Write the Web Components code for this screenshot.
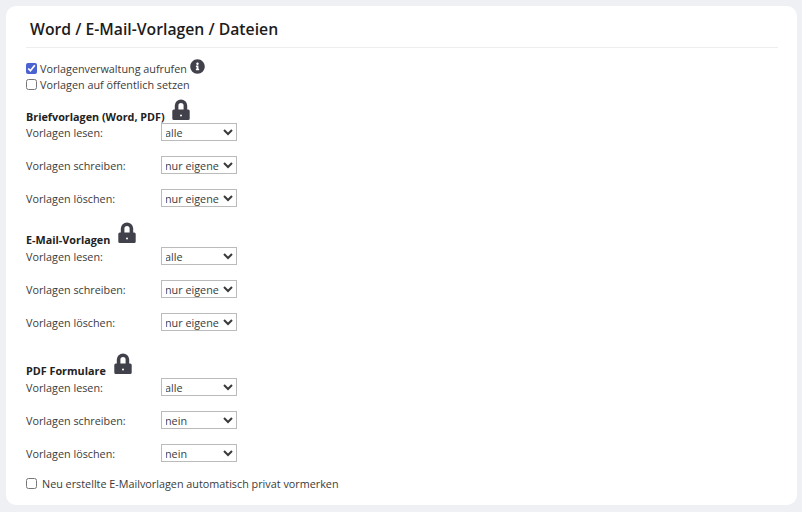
<!DOCTYPE html>
<html lang="de"><head><meta charset="utf-8">
<style>
html,body{margin:0;padding:0;background:#eff0f4;}
body{width:802px;height:512px;overflow:hidden;font-family:"Open Sans",sans-serif;font-size:10.8px;color:#3a3a3a;}
</style></head><body>
<settings-panel title-text="Word / E-Mail-Vorlagen / Dateien">
  <check-row checked info>Vorlagenverwaltung aufrufen</check-row>
  <check-row>Vorlagen auf öffentlich setzen</check-row>
  <perm-section heading="Briefvorlagen (Word, PDF)" style="margin-top:5px" values="alle|nur eigene|nur eigene"></perm-section>
  <perm-section heading="E-Mail-Vorlagen" style="margin-top:15px" lockgap="8" raised values="alle|nur eigene|nur eigene"></perm-section>
  <perm-section heading="PDF Formulare" style="margin-top:22px" lockgap="8" raised values="alle|nein|nein"></perm-section>
  <check-row style="margin-top:14px" wide>Neu erstellte E-Mailvorlagen automatisch privat vormerken</check-row>
</settings-panel>
<script>
class SettingsPanel extends HTMLElement{constructor(){super();const s=this.attachShadow({mode:"open"});
s.innerHTML=`<style>
:host{display:block;box-sizing:border-box;margin:6px 5px 7px 6px;height:499px;background:#fff;border-radius:10px;padding:10px 19px 0 20px;}
h1{margin:0 0 13px;padding:3px 0 7px 4px;height:21px;font:600 15.75px/21px "Open Sans",sans-serif;color:#1c1c1c;border-bottom:1px solid #eee;box-sizing:content-box;}
</style><h1></h1><slot></slot>`;
s.querySelector("h1").textContent=this.getAttribute("title-text");}}
customElements.define("settings-panel",SettingsPanel);

class CheckRow extends HTMLElement{constructor(){super();const s=this.attachShadow({mode:"open"});
const info=this.hasAttribute("info"),wide=this.hasAttribute("wide");
s.innerHTML=`<style>
:host{display:flex;align-items:center;height:16px;line-height:16px;}
input{margin:-1px ${wide?5:3}px 1px 0;width:11px;height:11px;accent-color:#4a63d0;flex:none;}
svg{width:15px;height:15px;margin:-6px 0 0 3px;fill:#41414b;}
</style><input type="checkbox" ${this.hasAttribute("checked")?"checked":""}><slot></slot>${info?`<svg viewBox="0 0 512 512"><path d="M256 8C119.043 8 8 119.083 8 256c0 136.997 111.043 248 248 248s248-111.003 248-248C504 119.083 392.957 8 256 8zm0 110c23.196 0 42 18.804 42 42s-18.804 42-42 42-42-18.804-42-42 18.804-42 42-42zm56 254c0 6.627-5.373 12-12 12h-88c-6.627 0-12-5.373-12-12v-24c0-6.627 5.373-12 12-12h12v-64h-12c-6.627 0-12-5.373-12-12v-24c0-6.627 5.373-12 12-12h64c6.627 0 12 5.373 12 12v100h12c6.627 0 12 5.373 12 12v24z"/></svg>`:""}`;}}
customElements.define("check-row",CheckRow);

class LockIcon extends HTMLElement{constructor(){super();this.attachShadow({mode:"open"}).innerHTML=`<style>:host{display:block;width:18px;height:22px;flex:none}svg{display:block}</style>
<svg width="18" height="22" viewBox="0 0 18 22"><path d="M4.6 13V7.6a4.4 4.4 0 0 1 8.8 0V13" fill="none" stroke="#41414b" stroke-width="3.6"/><path fill="#41414b" fill-rule="evenodd" d="M1.8 11.6h14.4a1.5 1.5 0 0 1 1.5 1.5v7.4a1.5 1.5 0 0 1-1.5 1.5H1.8a1.5 1.5 0 0 1-1.5-1.5v-7.4a1.5 1.5 0 0 1 1.5-1.5zm7.2 5a1 1 0 1 0 0 2a1 1 0 0 0 0-2z"/></svg>`;}}
customElements.define("lock-icon",LockIcon);

class PermRow extends HTMLElement{constructor(){super();const s=this.attachShadow({mode:"open"});
const v=this.getAttribute("value");
s.innerHTML=`<style>
:host{display:grid;grid-template-columns:135px 76px;align-items:center;height:18px;}
select{box-sizing:border-box;width:76px;height:18px;margin:0;padding:0;text-indent:-1px;font:10.8px "Open Sans",sans-serif;color:#3a3a3a;background:#fff;border:1px solid #bbb;border-radius:0;outline:0;}
</style><span><slot></slot></span><select></select>`;
const sel=s.querySelector("select");["alle","nur eigene","nein"].forEach(o=>{const e=document.createElement("option");e.textContent=o;if(o===v)e.selected=true;sel.append(e);});}}
customElements.define("perm-row",PermRow);

class PermSection extends HTMLElement{constructor(){super();const s=this.attachShadow({mode:"open"});
const vals=this.getAttribute("values").split("|"),labels=["Vorlagen lesen:","Vorlagen schreiben:","Vorlagen löschen:"];
const gap=this.getAttribute("lockgap")||"7",r=this.hasAttribute("raised")?1:0;
s.innerHTML=`<style>
:host{display:block}
.h{display:flex;align-items:flex-end;height:25px;font-weight:700;color:#222;line-height:14px}
.h b{font-weight:700;margin-bottom:${r-1}px}
lock-icon{margin:0 0 ${3+r}px ${gap}px}
.rows{display:flex;flex-direction:column;gap:15px}
</style><div class="h"><b></b><lock-icon></lock-icon></div><div class="rows">${vals.map((v,i)=>`<perm-row value="${v}">${labels[i]}</perm-row>`).join("")}</div>`;
s.querySelector("b").textContent=this.getAttribute("heading");}}
customElements.define("perm-section",PermSection);
</script>
</body></html>
